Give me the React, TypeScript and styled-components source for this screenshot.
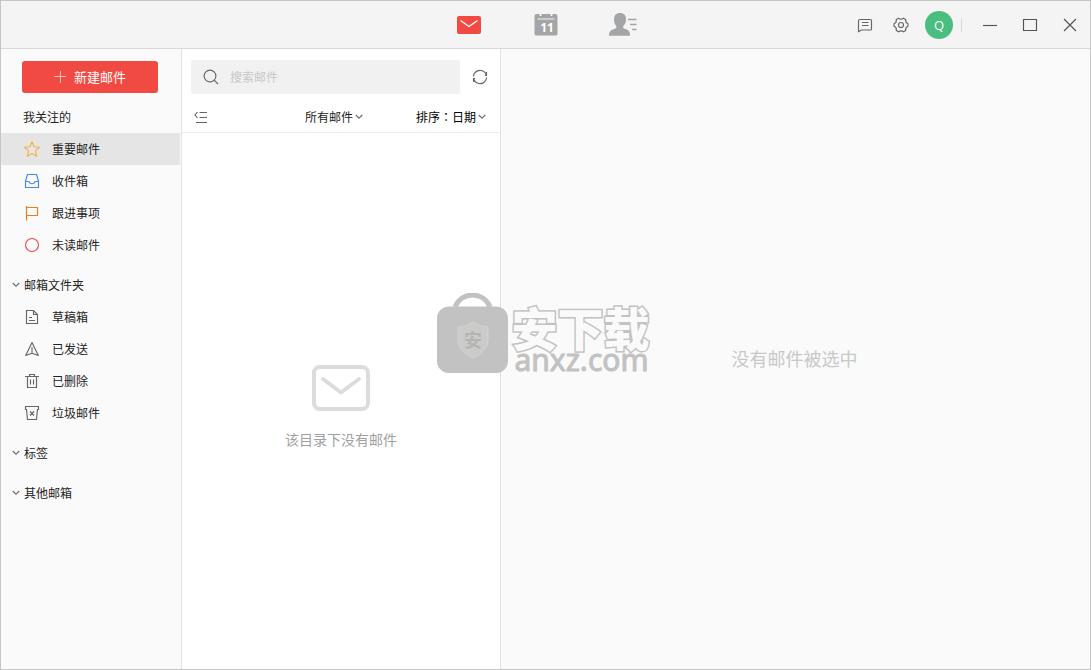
import React from "react";
import styled, { createGlobalStyle } from "styled-components";

const GlobalStyle = createGlobalStyle`
  *, *::before, *::after { box-sizing: border-box; }
  body {
    margin: 0;
    font-family: "Noto Sans CJK SC", sans-serif;
    font-size: 12px;
    line-height: 20px;
    color: #222;
    background: #fafafa;
  }
  button, input, select { font: inherit; color: inherit; }
  button { border: 0; padding: 0; background: none; cursor: pointer; }
  svg { display: block; flex: none; }
`;

const Window = styled.div`
  position: relative;
  display: flex;
  flex-direction: column;
  min-height: 100vh;
  border: 1px solid #c6c6c6;
`;

const Header = styled.header`
  display: grid;
  grid-template-columns: 1fr auto 1fr;
  align-items: center;
  height: 48px;
  background: #f4f4f4;
  border-bottom: 1px solid #d9d9d9;
`;

const MainNav = styled.nav`
  grid-column: 2;
  display: flex;
  gap: 49px;
`;

const NavButton = styled.button`
  display: grid;
  place-items: center;
  width: 28px;
  height: 28px;
`;

const HeaderTools = styled.div`
  display: flex;
  align-items: center;
  justify-content: flex-end;
  gap: 8px;
  padding-right: 6px;
`;

const ToolButton = styled.button`
  display: grid;
  place-items: center;
  width: 28px;
  height: 28px;
  color: #666;
`;

const Avatar = styled.button`
  width: 28px;
  height: 28px;
  margin-left: 2px;
  border-radius: 50%;
  background: #49be7f;
  color: #fff;
  font-family: "Open Sans", sans-serif;
  font-size: 13px;
  line-height: 28px;
`;

const Separator = styled.span`
  width: 1px;
  height: 14px;
  background: #d8d8d8;
`;

const WindowControls = styled.div`
  display: flex;
  gap: 12px;
  padding-left: 6px;
`;

const Body = styled.div`
  flex: 1;
  display: flex;
`;

const Sidebar = styled.aside`
  flex: none;
  width: 181px;
  padding-top: 12px;
  background: #fafafa;
  border-right: 1px solid #e2e2e2;
`;

const ComposeButton = styled.button`
  display: flex;
  align-items: center;
  justify-content: center;
  gap: 8px;
  width: 136px;
  height: 32px;
  margin: 0 21px 8px;
  border-radius: 3px;
  background: #f04a43;
  color: #fff;
  font-size: 13px;
`;

const Section = styled.section`
  margin-bottom: 8px;
`;

const SectionTitle = styled.h2`
  margin: 0;
  padding-left: 22px;
  font-size: 12px;
  font-weight: 400;
  line-height: 32px;
`;

const SectionToggle = styled.button`
  display: flex;
  align-items: center;
  gap: 4px;
  width: 100%;
  height: 32px;
  padding-left: 11px;
`;

const FolderList = styled.ul`
  list-style: none;
  margin: 0;
  padding: 0;
`;

const FolderLink = styled.a<{ $active?: boolean }>`
  display: flex;
  align-items: center;
  gap: 12px;
  height: 32px;
  margin-right: 1px;
  padding-left: 23px;
  color: inherit;
  text-decoration: none;
  background: ${(p) => (p.$active ? "#e5e5e5" : "transparent")};
`;

const ListPane = styled.section`
  flex: none;
  display: flex;
  flex-direction: column;
  width: 319px;
  background: #fff;
  border-right: 1px solid #e2e2e2;
`;

const SearchRow = styled.div`
  display: flex;
  align-items: center;
  gap: 6px;
  padding: 11px 6px 7px 9px;
`;

const SearchBox = styled.label`
  flex: 1;
  display: flex;
  align-items: center;
  gap: 11px;
  height: 34px;
  padding-left: 12px;
  border-radius: 2px;
  background: #f1f1f1;
  color: #666;
`;

const SearchInput = styled.input`
  flex: 1;
  min-width: 0;
  border: 0;
  padding: 0;
  outline: 0;
  background: none;
  &::placeholder { color: #c8c8c8; opacity: 1; }
`;

const FilterRow = styled.div`
  display: flex;
  align-items: center;
  height: 32px;
  padding: 0 14px 0 5px;
  border-bottom: 1px solid #ececec;
`;

const Picker = styled.label<{ $push?: boolean }>`
  display: flex;
  align-items: center;
  gap: 2px;
  margin-left: ${(p) => (p.$push ? "auto" : "53px")};
`;

const PickerSelect = styled.select<{ $width: number; $strong?: boolean }>`
  appearance: none;
  width: ${(p) => p.$width}px;
  height: 20px;
  padding: 0;
  border: 0;
  outline: 0;
  background: none;
  font-family: ${(p) => (p.$strong ? '"Noto Sans CJK TC"' : '"Noto Sans CJK SC"')}, sans-serif;
  color: ${(p) => (p.$strong ? "#000" : "#222")};
`;

const EmptyList = styled.div`
  flex: 1;
  display: flex;
  flex-direction: column;
  align-items: center;
  justify-content: center;
  gap: 18px;
  padding-top: 12px;
  font-size: 14px;
  color: #a0a0a0;
`;

const DetailPane = styled.main`
  flex: 1;
  display: grid;
  place-items: center;
  padding: 0 2px 2px 0;
  background: #fafafa;
  font-size: 18px;
  line-height: 28px;
  color: #c8c8c8;
`;

const Watermark = styled.div`
  position: absolute;
  top: 50%;
  left: 50%;
  display: flex;
  gap: 4px;
  height: 84px;
  padding-right: 5px;
  transform: translate(-50%, -50%);
  pointer-events: none;
`;

const WatermarkText = styled.div`
  display: flex;
  flex-direction: column;
  padding-top: 10px;
`;

const WatermarkTitle = styled.span`
  font-size: 46px;
  font-weight: 900;
  line-height: 46px;
  color: #fafafa;
  -webkit-text-stroke: 3px #c2c2c2;
  paint-order: stroke fill;
`;

const WatermarkSite = styled.span`
  padding-left: 3px;
  font-family: "Noto Sans", "Open Sans", sans-serif;
  font-size: 30px;
  line-height: 22px;
  color: #c2c2c2;
  -webkit-text-stroke: 1px #c2c2c2;
`;

const Line = ({ size = 16, color = "#666", children }: { size?: number; color?: string; children: React.ReactNode }) => (
  <svg width={size} height={size} viewBox={`0 0 ${size} ${size}`} fill="none" stroke={color} strokeWidth="1.150" aria-hidden="true">
    {children}
  </svg>
);

const Chevron = () => (
  <svg width="8" height="6" viewBox="0 0 8 6" fill="none" stroke="#707070" strokeWidth="1.200" aria-hidden="true">
    <path d="M.8 1 4 4.200 7.200 1" />
  </svg>
);

type Folder = { label: string; icon: React.ReactNode; active?: boolean };

const favourites: Folder[] = [
  { label: "重要邮件", active: true, icon: <Line color="#f6b04a"><path strokeLinejoin="round" d="M8 .8l2.200 4.900 5.200.6-3.800 3.600 1 5.300L8 12.600l-4.600 2.600 1-5.300L.6 6.300l5.200-.6z" /></Line> },
  { label: "收件箱", icon: <Line color="#4a86e8"><path strokeLinejoin="round" d="M3.500 1.500h9l2 6.500v6.500h-13V8zM1.500 8.500H5c.5 3 5.500 3 6 0h3.500" /></Line> },
  { label: "跟进事项", icon: <Line color="#ee7d1b"><path d="M2.500 1v14.500M2.500 2.500h11v8h-11" /></Line> },
  { label: "未读邮件", icon: <Line color="#ee4a4a"><circle cx="8" cy="8" r="6.500" /></Line> },
];

const folders: Folder[] = [
  { label: "草稿箱", icon: <Line><path d="M2.500 1.500h7l4 4v9h-11zM9.500 1.500v4h4M5 8.500h3M5 11.500h6" /></Line> },
  { label: "已发送", icon: <Line><path strokeLinejoin="round" d="M8 1.500 14.300 14.500 8 12.300 1.700 14.500zM8 6v6.300" /></Line> },
  { label: "已删除", icon: <Line><path d="M1 3.500h14M5.500 3.500v-2h5v2M3.500 3.500v11h9v-11M6.500 6.500v5M9.500 6.500v5" /></Line> },
  { label: "垃圾邮件", icon: <Line><path d="M1.500 4.500v-3h13v3h-1l-1 10h-9l-1-10zM6 6.500l4 4M10 6.500l-4 4" /></Line> },
];

const Folders = ({ items }: { items: Folder[] }) => (
  <FolderList>
    {items.map((item) => (
      <li key={item.label}>
        <FolderLink href="#" $active={item.active}>
          {item.icon}
          {item.label}
        </FolderLink>
      </li>
    ))}
  </FolderList>
);

export default function App() {
  return (
    <>
      <GlobalStyle />
      <Window>
        <Header>
          <MainNav>
            <NavButton aria-label="邮件">
              <svg width="24" height="18" viewBox="0 0 24 18">
                <rect width="24" height="18" rx="2" fill="#f04a43" />
                <path d="M3.500 4.500 12 10.500l8.500-6" fill="none" stroke="#fff" strokeWidth="1.300" />
              </svg>
            </NavButton>
            <NavButton aria-label="日历">
              <svg width="24" height="24" viewBox="0 0 24 24">
                <path d="M2.500 1h3v1.500q1 1.200 2 0V1h9v1.500q1 1.200 2 0V1h3Q23.500 1 23.500 3v18q0 1.500-1.500 1.500H2Q.5 22.500.5 21V3Q.5 1 2.500 1z" fill="#a3a5a6" />
                <path d="M3.500 6h17" stroke="#f4f4f4" />
                <text x="13" y="19" textAnchor="middle" fill="#fff" fontFamily="Open Sans" fontWeight="700" fontSize="12">11</text>
              </svg>
            </NavButton>
            <NavButton aria-label="联系人">
              <svg width="28" height="24" viewBox="0 0 28 24">
                <path d="M11 0c4 0 6 2.600 6 6.200 0 3-1 5.200-2.700 6.700-.5 1.800.3 2.500 2.700 3.300 3.500 1.200 4 3 4 6.500H0c0-3.500 1-5.300 4.500-6.500 2.500-.8 3.300-1.500 2.800-3.300C5.800 11.400 5 9.200 5 6.200 5 2.600 7 0 11 0z" fill="#a3a5a6" />
                <path d="M19 6.500h8.500M21 11.500h6.500M23 16.500h4.500" stroke="#a3a5a6" strokeWidth="1.700" />
              </svg>
            </NavButton>
          </MainNav>
          <HeaderTools>
            <ToolButton aria-label="消息">
              <Line color="currentColor"><path strokeLinejoin="round" d="M3 2.500h10.500q1 0 1 1v8.500q0 1-1 1H4.500L1.500 14.800V4q0-1.500 1.500-1.500zM5 5.500h6.500M5 8.500h6.500" /></Line>
            </ToolButton>
            <ToolButton aria-label="设置">
              <Line color="currentColor">
                <path strokeLinejoin="round" d="M5.600 1.200Q8 3.200 10.400 1.200L12.700 2.500Q12.200 5.600 15 6.700V9.300Q12.200 10.400 12.700 13.500L10.400 14.800Q8 12.800 5.600 14.800L3.300 13.500Q3.800 10.400 1 9.300V6.700Q3.800 5.600 3.300 2.500z" />
                <circle cx="8" cy="8" r="2.500" />
              </Line>
            </ToolButton>
            <Avatar aria-label="账户">Q</Avatar>
            <Separator />
            <WindowControls>
              <ToolButton aria-label="最小化"><Line color="#555"><path d="M1 8.500h14" /></Line></ToolButton>
              <ToolButton aria-label="最大化"><Line color="#555"><path d="M1.500 2.500h13v11h-13z" /></Line></ToolButton>
              <ToolButton aria-label="关闭"><Line color="#555"><path d="M2 2l12 12M14 2 2 14" /></Line></ToolButton>
            </WindowControls>
          </HeaderTools>
        </Header>
        <Body>
          <Sidebar>
            <ComposeButton>
              <svg width="12" height="12" viewBox="0 0 12 12" stroke="#fbc0bd" aria-hidden="true"><path d="M6.500 0v12M0 5.500h12" /></svg>
              新建邮件
            </ComposeButton>
            <Section>
              <SectionTitle>我关注的</SectionTitle>
              <Folders items={favourites} />
            </Section>
            <Section>
              <SectionToggle><Chevron />邮箱文件夹</SectionToggle>
              <Folders items={folders} />
            </Section>
            <Section><SectionToggle><Chevron />标签</SectionToggle></Section>
            <Section><SectionToggle><Chevron />其他邮箱</SectionToggle></Section>
          </Sidebar>
          <ListPane>
            <SearchRow>
              <SearchBox>
                <Line color="currentColor"><circle cx="7" cy="7" r="5.900" /><path d="M11.200 11.200 15 15" /></Line>
                <SearchInput type="search" placeholder="搜索邮件" aria-label="搜索邮件" />
              </SearchBox>
              <ToolButton aria-label="刷新">
                <Line color="currentColor">
                  <path d="M2.600 4.200A6.600 6.600 0 0 1 14.300 6M13.400 11.800A6.600 6.600 0 0 1 1.700 10M14.500 3v3.500h-1.500M1.500 13V9.500H3" />
                  <path d="M1.400 7.500A6.600 6.600 0 0 1 2.600 4.200M14.600 8.500A6.600 6.600 0 0 1 13.400 11.800" />
                </Line>
              </ToolButton>
            </SearchRow>
            <FilterRow>
              <ToolButton aria-label="收起列表">
                <Line color="currentColor"><path d="M6.500 3.500H14M6.500 8.500H14M3 13.500h11M4.500 3 2 6 4.500 9" /></Line>
              </ToolButton>
              <Picker $push>
                <PickerSelect $width={48} aria-label="筛选邮件" defaultValue="all"><option value="all">所有邮件</option></PickerSelect>
                <Chevron />
              </Picker>
              <Picker>
                <PickerSelect $width={60} $strong aria-label="排序方式" defaultValue="date"><option value="date">排序：日期</option></PickerSelect>
                <Chevron />
              </Picker>
            </FilterRow>
            <EmptyList>
              <svg width="58" height="46" viewBox="0 0 58 46" fill="none" stroke="#dcdcdc" strokeWidth="4" aria-hidden="true">
                <rect x="2" y="2" width="54" height="42" rx="6" />
                <path d="M11 14 29 27.500 47 14" strokeLinecap="round" strokeLinejoin="round" />
              </svg>
              该目录下没有邮件
            </EmptyList>
          </ListPane>
          <DetailPane>没有邮件被选中</DetailPane>
        </Body>
        <Watermark>
          <svg width="71" height="80" viewBox="0 0 71 80">
            <path d="M18 14C24-2 47-2 53 14" fill="none" stroke="#c2c2c2" strokeWidth="5" />
            <rect y="13.500" width="71" height="66.500" rx="12" fill="#c2c2c2" />
            <path d="M36 29q7 5 15 5v14q0 10-15 17-15-7-15-17V34q8 0 15-5z" fill="#cbcbca" stroke="#d2d2d0" />
            <text x="36" y="54" textAnchor="middle" fill="#b4b4b4" fontFamily="Noto Sans CJK SC" fontWeight="700" fontSize="18">安</text>
          </svg>
          <WatermarkText>
            <WatermarkTitle>安下载</WatermarkTitle>
            <WatermarkSite>anxz.com</WatermarkSite>
          </WatermarkText>
        </Watermark>
      </Window>
    </>
  );
}
